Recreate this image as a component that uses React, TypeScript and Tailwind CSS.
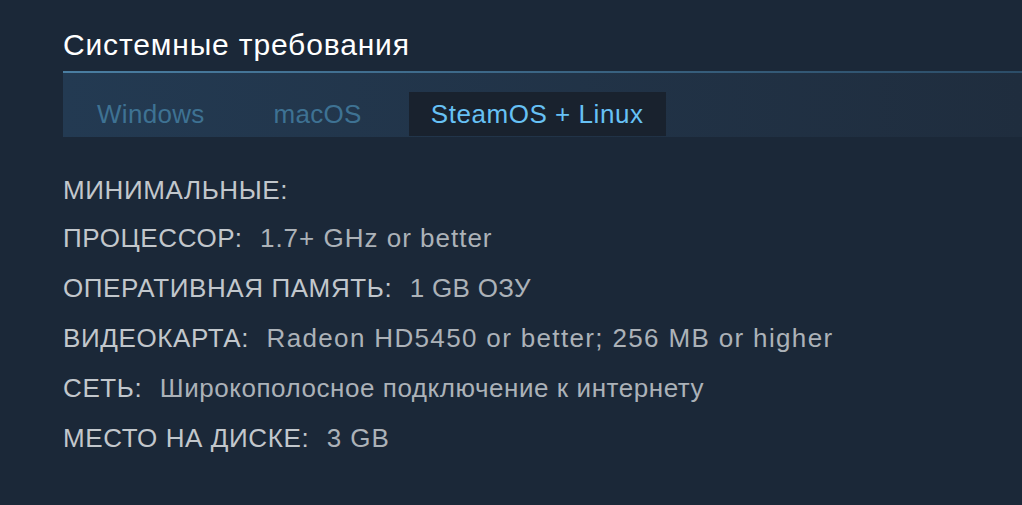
// value tracking differs: the Latin text in the original is set wider than the Cyrillic
const rows: { k: string; v: string; vt: string }[] = [
  { k: "ПРОЦЕССОР:", v: "1.7+ GHz or better", vt: "tracking-[1px]" },
  { k: "ОПЕРАТИВНАЯ ПАМЯТЬ:", v: "1 GB ОЗУ", vt: "tracking-[0.3px]" },
  { k: "ВИДЕОКАРТА:", v: "Radeon HD5450 or better; 256 MB or higher", vt: "tracking-[1.35px]" },
  { k: "СЕТЬ:", v: "Широкополосное подключение к интернету", vt: "tracking-[0.55px]" },
  { k: "МЕСТО НА ДИСКЕ:", v: "3 GB", vt: "tracking-[1px]" },
];

const tabs = ["Windows", "macOS", "SteamOS + Linux"];

export default function App() {
  return (
    <div className="min-h-[505px] bg-[#1b2838] pl-[63px] pt-[27px] font-['Liberation_Sans',Arial,sans-serif]">
      <h2 className="text-[30px] leading-[36px] tracking-[0.85px] text-white">Системные требования</h2>

      <div className="mt-[8px] h-[2px] bg-gradient-to-r from-[#4a7ea2] to-[#2c4d68]" />
      <div className="flex gap-[25px] bg-gradient-to-r from-[#233a52] to-[#1f2d3e] pb-[1px] pl-[12px] pt-[19px]">
        {tabs.map((t, i) => (
          <div
            key={t}
            className={
              i === 2
                ? "h-[44px] bg-[#19222e] px-[22px] text-[26px] leading-[44px] tracking-[0.55px] text-[#67c1f5]"
                : "h-[44px] px-[22px] text-[26px] leading-[44px] tracking-[0.3px] text-[#3e7293]"
            }
          >
            {t}
          </div>
        ))}
      </div>

      <div className="mt-[33px] text-[26px] leading-[50px] text-[#acb2b8]">
        <div className="leading-[40px] tracking-[0.6px] text-[#c2c7cc]">МИНИМАЛЬНЫЕ:</div>
        <div className="h-[3px]" />
        {rows.map(({ k, v, vt }) => (
          <div key={k} className="whitespace-pre">
            <span className="tracking-[0.6px] text-[#c2c7cc]">{k}</span>
            {"  "}
            <span className={`ml-[3px] ${vt}`}>{v}</span>
          </div>
        ))}
      </div>
    </div>
  );
}
